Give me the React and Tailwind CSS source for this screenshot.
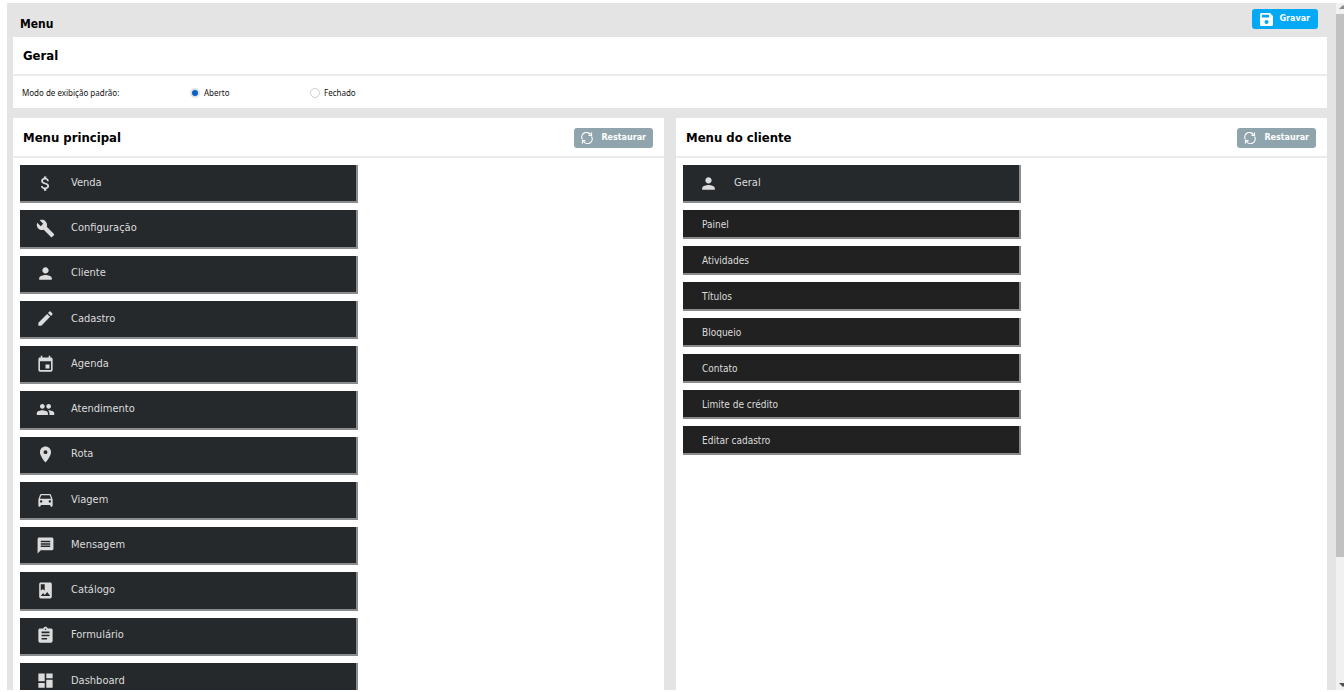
import {
  MdAttachMoney,
  MdBuild,
  MdPerson,
  MdEdit,
  MdEvent,
  MdPeople,
  MdLocationOn,
  MdDirectionsCar,
  MdMessage,
  MdAssignment,
  MdDashboard,
} from 'react-icons/md'

const AlbumIcon = ({ className }) => (
  <svg viewBox="0 0 24 24" fill="currentColor" className={className} aria-hidden="true">
    <path d="M18 2H6c-1.100 0-2 .9-2 2v16c0 1.100.9 2 2 2h12c1.100 0 2-.9 2-2V4c0-1.100-.9-2-2-2zM6 4h5v8l-2.500-1.500L6 12V4zm0 15l3-3.860 2.140 2.580 3-3.860L18 19H6z" />
  </svg>
)

const SaveIcon = () => (
  <svg viewBox="0 0 13 13" className="size-[13px]" aria-hidden="true">
    <path
      fill="currentColor"
      fillRule="evenodd"
      d="M1.500 0H10l3 3v8.500a1.500 1.500 0 0 1-1.500 1.500h-10A1.500 1.500 0 0 1 0 11.500v-10A1.500 1.500 0 0 1 1.500 0zM2 1.700v2.800h7V1.700zM6.500 7a2 2 0 1 0 0 4 2 2 0 0 0 0-4z"
    />
  </svg>
)

const RefreshIcon = () => (
  <svg viewBox="0 0 12 12" className="size-3" fill="none" stroke="currentColor" strokeWidth="1.200" aria-hidden="true">
    <path d="M1.500 7.500A4.600 4.600 0 0 1 9.500 2.700M10.500 4.500A4.600 4.600 0 0 1 2.500 9.300" />
    <path d="M10.500 .5v2.800H7.500M1.500 11.500V8.700h3" />
  </svg>
)

const mainMenu = [
  { label: 'Venda', icon: MdAttachMoney },
  { label: 'Configuração', icon: MdBuild },
  { label: 'Cliente', icon: MdPerson },
  { label: 'Cadastro', icon: MdEdit },
  { label: 'Agenda', icon: MdEvent },
  { label: 'Atendimento', icon: MdPeople },
  { label: 'Rota', icon: MdLocationOn },
  { label: 'Viagem', icon: MdDirectionsCar },
  { label: 'Mensagem', icon: MdMessage },
  { label: 'Catálogo', icon: AlbumIcon },
  { label: 'Formulário', icon: MdAssignment },
  { label: 'Dashboard', icon: MdDashboard },
]

const clientMenu = ['Painel', 'Atividades', 'Títulos', 'Bloqueio', 'Contato', 'Limite de crédito', 'Editar cadastro']

const RestoreButton = () => (
  <button
    type="button"
    className="flex h-5 items-center gap-2 rounded-[3px] bg-[#90a4ae] px-[7px] font-['DejaVu_Sans'] text-[8px] font-bold text-white"
  >
    <RefreshIcon />
    Restaurar
  </button>
)

const MenuItem = ({ icon: Icon, label }) => (
  <li className="flex min-h-[38px] items-center gap-4 border-r-2 border-b-2 border-[#8a8c8d] bg-[#25292c] pl-4 text-[11px] text-[#dcdcdc]">
    <Icon className="size-[19px] shrink-0" />
    {label}
  </li>
)

const SubMenuItem = ({ label }) => (
  <li className="flex h-[29px] items-center border-r-2 border-b-2 border-[#8a8a8a] bg-[#212121] pt-[2px] pl-[19px] text-[10px] text-[#dcdcdc]">
    {label}
  </li>
)

const Panel = ({ title, children }) => (
  <section className="min-w-0 flex-1 bg-white">
    <header className="flex h-10 items-center justify-between border-b-2 border-[#ebebeb] pt-px pr-[11px] pl-[10px]">
      <h2 className="text-[13px] font-bold text-black">{title}</h2>
      <RestoreButton />
    </header>
    <div className="px-[7px] pt-[7px]">{children}</div>
  </section>
)

const ModeOption = ({ label, value, defaultChecked }) => (
  <label className="flex w-[120px] items-center gap-1">
    <input
      type="radio"
      name="mode"
      value={value}
      defaultChecked={defaultChecked}
      className="size-[10px] appearance-none rounded-full border border-[#cfcfcf] bg-white checked:border-2 checked:border-[#dfe3e8] checked:bg-[#0a5fc4]"
    />
    {label}
  </label>
)

const Scrollbar = () => (
  <div className="flex w-2 shrink-0 flex-col overflow-hidden bg-[#f1f1f1]" aria-hidden="true">
    <svg viewBox="0 0 8 11" className="h-[11px] w-2">
      <path d="M3 6l4-4 4 4z" fill="#8a8a8a" />
    </svg>
    <div className="h-[79%] bg-[#c1c1c1]" />
    <svg viewBox="0 0 8 11" className="mt-auto h-[11px] w-2">
      <path d="M3 4l4 4 4-4z" fill="#505050" />
    </svg>
  </div>
)

const App = () => {
  return (
    <div className="flex h-screen bg-white pt-[3px] pb-[2px] pl-[7px] font-['DejaVu_Sans_Condensed','DejaVu_Sans',sans-serif]">
      <main className="flex min-w-0 flex-1 flex-col overflow-hidden bg-[#e4e4e4] pr-[9px] pl-[6px]">
        <header className="flex h-[34px] shrink-0 items-center justify-between pr-[9px] pl-[7px]">
          <h1 className="pt-2 text-xs font-bold text-black">Menu</h1>
          <button
            type="button"
            className="mb-[2px] flex h-5 items-center gap-[7px] rounded-[3px] bg-[#03a9f4] px-2 font-['DejaVu_Sans'] text-[8px] font-bold text-white"
          >
            <SaveIcon />
            Gravar
          </button>
        </header>

        <section className="shrink-0 bg-white">
          <h2 className="flex h-[39px] items-center border-b-2 border-[#ebebeb] pl-[10px] text-[13px] font-bold text-black">
            Geral
          </h2>
          <div className="flex h-8 items-center pt-[2px] pl-[9px] font-['Noto_Sans'] text-[8px] text-[#111]">
            <span className="w-[168px]">Modo de exibição padrão:</span>
            <ModeOption label="Aberto" value="open" defaultChecked />
            <ModeOption label="Fechado" value="closed" />
          </div>
        </section>

        <div className="mt-[10px] flex flex-1 gap-3">
          <Panel title="Menu principal">
            <ul className="grid min-h-[536px] w-[53%] auto-rows-fr gap-[7px]">
              {mainMenu.map((item) => (
                <MenuItem key={item.label} icon={item.icon} label={item.label} />
              ))}
            </ul>
          </Panel>
          <Panel title="Menu do cliente">
            <ul className="flex w-[53%] flex-col gap-[7px]">
              <MenuItem icon={MdPerson} label="Geral" />
              {clientMenu.map((label) => (
                <SubMenuItem key={label} label={label} />
              ))}
            </ul>
          </Panel>
        </div>
      </main>
      <Scrollbar />
    </div>
  )
}

export default App
